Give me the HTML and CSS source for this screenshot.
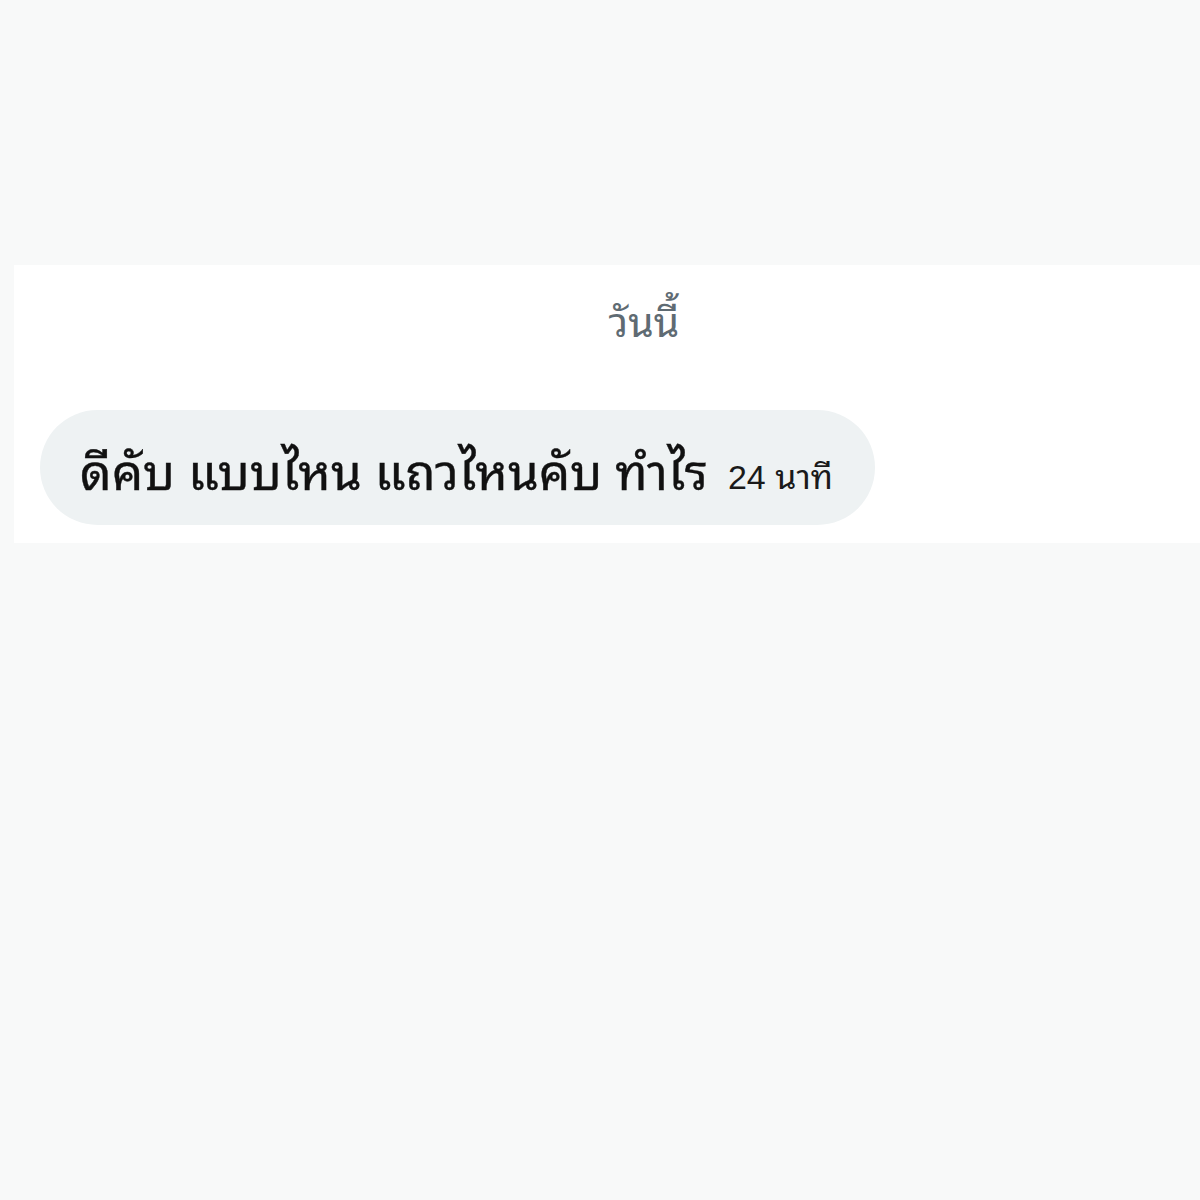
FILE: index.html
```html
<!DOCTYPE html>
<html>
    <head>
        <title>Chat</title>
        <link rel="stylesheet" href="styles.css">
    </head>
    <body>
        <!-- Message list -->
        <div class="chat">
            <div class="day">วันนี้</div>
            <div class="row">
                <div class="bubble">
                    <span class="text">ดีคับ แบบไหน แถวไหนคับ ทำไร</span>
                    <span class="time">24 นาที</span>
                </div>
            </div>
        </div>
    </body>
</html>
```

FILE: styles.css
```css
/* Page */
body {
margin: 0;
padding: 265px 0 0 14px;
background-color: #f8f9f9;
font-family: "Noto Sans Thai Looped", "Thonburi", "Garuda", "Loma", "Norasi", "Kinnari", "Noto Serif Thai", "Noto Sans Thai", sans-serif;
height: 1200px;
box-sizing: border-box;
}

/* White chat panel */
.chat {
background-color: #fff;
height: 278px;
display: flex;
flex-direction: column;
}

.day {
text-align: center;
color: #5f6b73;
font-size: 41px;
padding-top: 26px;
margin-left: 74px;
height: 84px;
line-height: 56px;
}

.row {
display: flex;
padding-left: 26px;
margin-top: 35px;
}

/* Message bubble */
.bubble {
display: flex;
align-items: center;
background-color: #eef2f3;
border-radius: 58px;
height: 115px;
box-sizing: border-box;
padding: 0 40px 0 40px;
width: 835px;
white-space: nowrap;
}

.text {
font-size: 49.5px;
color: #111;
-webkit-text-stroke: 0.4px #111;
}

.time {
font-family: "Liberation Sans", "Noto Sans Thai Looped", "Garuda", "Loma", "Norasi", sans-serif;
font-size: 34px;
color: #1a1a1a;
margin-left: 20px;
margin-top: 12px;
}
```
